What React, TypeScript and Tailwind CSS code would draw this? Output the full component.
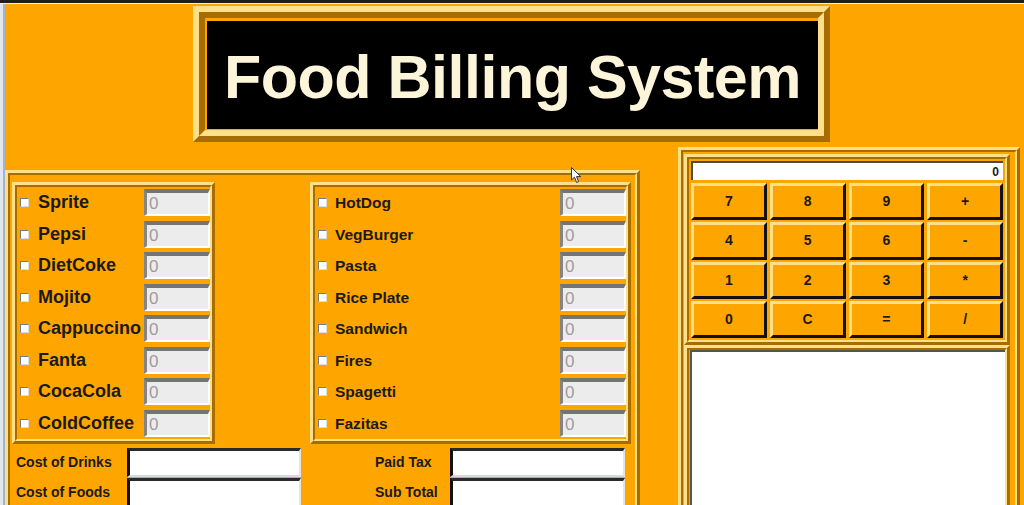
import React from 'react';

// item lists for the two menu panels
const drinks = ['Sprite', 'Pepsi', 'DietCoke', 'Mojito', 'Cappuccino', 'Fanta', 'CocaCola', 'ColdCoffee'];
const foods = ['HotDog', 'VegBurger', 'Pasta', 'Rice Plate', 'Sandwich', 'Fires', 'Spagetti', 'Fazitas'];
const keys = ['7', '8', '9', '+', '4', '5', '6', '-', '1', '2', '3', '*', '0', 'C', '=', '/'];

// Swing-like ridge border: raised outside, lowered inside
function Ridge({ className = '', innerClassName = '', children }: { className?: string; innerClassName?: string; children?: React.ReactNode }) {
  return (
    <div className={`shrink-0 border-[3px] border-t-[#ffe08a] border-l-[#ffe08a] border-r-[#a86d00] border-b-[#a86d00] ${className}`}>
      <div className={`h-full border-2 border-t-[#a86d00] border-l-[#a86d00] border-r-[#ffe08a] border-b-[#ffe08a] ${innerClassName}`}>
        {children}
      </div>
    </div>
  );
}

function Checkbox() {
  return <div className="w-[9px] h-[9px] shrink-0 bg-white border border-t-[#7a7a7a] border-l-[#7a7a7a] border-r-[#dcdcdc] border-b-[#dcdcdc]" />;
}

function QtyBox() {
  return (
    <div className="ml-auto w-[66px] h-[27px] shrink-0 bg-[#ececec] border-t-[4px] border-l-[3px] border-r-2 border-b-2 border-t-[#747474] border-l-[#848484] border-r-white border-b-white flex items-center pl-[2px] text-[17px] text-[#9c9c9c] leading-none">
      0
    </div>
  );
}

function CostInput({ width }: { width: string }) {
  return <div className={`${width} h-[29px] shrink-0 bg-white border-t-[3px] border-l-[3px] border-r-2 border-b-2 border-t-[#2a2a2a] border-l-[#111] border-r-[#e4e4e4] border-b-[#dadada]`} />;
}

export default function App() {
  return (
    <div className="relative w-[1024px] h-[505px] overflow-hidden bg-[#ffa500] text-[#1a1a1a]" style={{ fontFamily: '"Liberation Sans", Arial, sans-serif' }}>
      {/* window chrome */}
      <div className="h-[3px] bg-[#1e1e1e]" />
      <div className="h-[1px] bg-[#fff1c4]" />
      <div className="flex h-[501px] overflow-hidden">
        <div className="w-[3px] shrink-0 bg-[#e1e7ee]" />
        <div className="w-[2px] shrink-0 bg-[#a3b4c6]" />

        <div className="flex-1 flex flex-col">
          {/* title */}
          <div className="h-[143px] shrink-0 pl-[188px] pt-[2px]">
            <div className="w-[637px] h-[136px] border-[6px] border-t-[#ffe08a] border-l-[#ffe08a] border-r-[#a86d00] border-b-[#a86d00]">
              <div className="h-full border-[6px] border-t-[#a86d00] border-l-[#a86d00] border-r-[#ffe08a] border-b-[#ffe08a] pt-[3px] pl-[2px] pb-[1px]">
                <div className="h-full bg-black flex items-center justify-center pt-[4px]">
                  <span className="text-[61px] font-bold text-[#fdf5da] leading-none tracking-[-0.5px]">Food Billing System</span>
                </div>
              </div>
            </div>
          </div>

          <div className="flex shrink-0">
            {/* left: menu + costs */}
            <Ridge className="mt-[23px] w-[635px] h-[340px]" innerClassName="flex flex-col">
              <div className="flex mt-[7px] ml-[2px]">
                <Ridge className="w-[203px] h-[262px]">
                  {drinks.map((d) => (
                    <div key={d} className="h-[31.5px] flex items-center pl-[3px]">
                      <Checkbox />
                      <span className="ml-[9px] text-[18px] font-bold">{d}</span>
                      <QtyBox />
                    </div>
                  ))}
                </Ridge>
                <Ridge className="ml-[95px] w-[321px] h-[262px]">
                  {foods.map((f) => (
                    <div key={f} className="h-[31.5px] flex items-center pl-[3px]">
                      <Checkbox />
                      <span className="ml-[8px] text-[15.5px] font-bold">{f}</span>
                      <QtyBox />
                    </div>
                  ))}
                </Ridge>
              </div>

              <div className="mt-[3px] pl-[6px] flex flex-col">
                <div className="h-[30px] flex items-center">
                  <span className="w-[111px] text-[14px] font-bold">Cost of Drinks</span>
                  <CostInput width="w-[174px]" />
                  <span className="ml-[74px] w-[75px] text-[14px] font-bold">Paid Tax</span>
                  <CostInput width="w-[175px]" />
                </div>
                <div className="h-[30px] flex items-center">
                  <span className="w-[111px] text-[14px] font-bold">Cost of Foods</span>
                  <CostInput width="w-[174px]" />
                  <span className="ml-[74px] w-[75px] text-[14px] font-bold">Sub Total</span>
                  <CostInput width="w-[175px]" />
                </div>
              </div>
            </Ridge>

            {/* right: calculator + receipt */}
            <Ridge className="ml-[38px] w-[342px] h-[370px]" innerClassName="flex flex-col px-[1px]">
              <Ridge className="mt-[2px] w-[326px]" innerClassName="px-[2px] pt-[2px] pb-[2px]">
                <div className="h-[19px] bg-white border-t-2 border-l-2 border-t-[#4a4a4a] border-l-[#4a4a4a] flex items-center justify-end pr-[4px] text-[12px] font-bold">
                  0
                </div>
                <div className="mt-[3px] grid grid-cols-4 grid-rows-4 gap-x-[3px] gap-y-[2px] h-[155px]">
                  {keys.map((k) => (
                    <div key={k} className="bg-[#ffa500] border-[3px] border-t-[#ffe08a] border-l-[#ffe08a] border-r-[#111] border-b-[#111] flex items-center justify-center text-[14px] font-bold">
                      {k}
                    </div>
                  ))}
                </div>
              </Ridge>
              <Ridge className="w-[326px] flex-1">
                <div className="h-full ml-[1px] bg-white border-t-2 border-l-2 border-t-[#555] border-l-[#555]" />
              </Ridge>
            </Ridge>
          </div>
        </div>
      </div>

      {/* mouse pointer */}
      <svg className="absolute left-[571px] top-[167px]" width="11" height="17" viewBox="0 0 11 17">
        <path d="M0.5 0.5 L0.5 13 L3.5 10.2 L5.6 15.5 L7.6 14.7 L5.5 9.6 L9.8 9.6 Z" fill="white" stroke="#333" strokeWidth="1" />
      </svg>
    </div>
  );
}
